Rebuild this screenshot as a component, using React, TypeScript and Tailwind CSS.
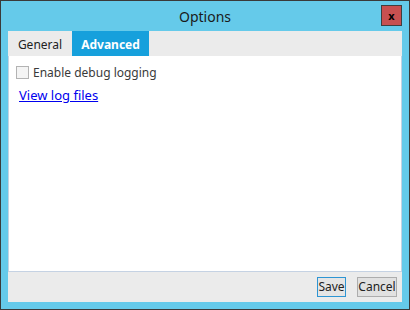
import React from 'react';

const App: React.FC = () => {
  return (
    <div className="w-[410px] h-[310px] border border-[#3a3a3a] bg-[#65caea] flex flex-col font-['Noto_Sans','Liberation_Sans',sans-serif]">
      <div className="h-[30px] flex items-center relative shrink-0">
        <div className="flex-1 text-center text-[14px] text-[#1a1a1a] pt-[1px]">Options</div>
        <button className="absolute right-[7px] top-[4px] w-[21px] h-[21px] bg-[#c75050] border border-[#3f3f3f] flex items-center justify-center text-[11px] font-bold text-black leading-none">
          x
        </button>
      </div>
      <div className="mx-[7px] mb-[7px] flex-1 flex flex-col bg-[#ebebeb]">
        <div className="h-[25px] flex items-stretch text-[12px] shrink-0">
          <div className="w-[64px] flex items-center justify-center text-[#222] pt-[2px]">General</div>
          <div className="w-[77px] flex items-center justify-center bg-[#16a0dc] text-white font-bold pt-[2px]">Advanced</div>
        </div>
        <div className="flex-1 bg-white border-l border-r border-b border-[#c5d2e3] flex flex-col px-[7px] pt-[8px]">
          <label className="flex items-center gap-[4px] text-[12px] text-[#3a3a3a] h-[16px]">
            <span className="w-[13px] h-[13px] border border-[#b3b3b3] bg-[#f4f4f4] shrink-0" />
            <span className="pt-[2px]">Enable debug logging</span>
          </label>
          <a className="mt-[6px] ml-[3px] text-[13px] text-[#0000ee] underline w-fit" href="#">
            View log files
          </a>
        </div>
        <div className="h-[30px] flex items-center justify-end gap-[11px] pr-[5px] shrink-0">
          <button className="w-[29px] h-[20px] text-[12px] leading-none bg-[#e5e5e5] border border-[#2e95d3] text-[#222]">Save</button>
          <button className="w-[40px] h-[20px] text-[12px] leading-none bg-[#e1e1e1] border border-[#adadad] text-[#222]">Cancel</button>
        </div>
      </div>
    </div>
  );
};

export default App;
